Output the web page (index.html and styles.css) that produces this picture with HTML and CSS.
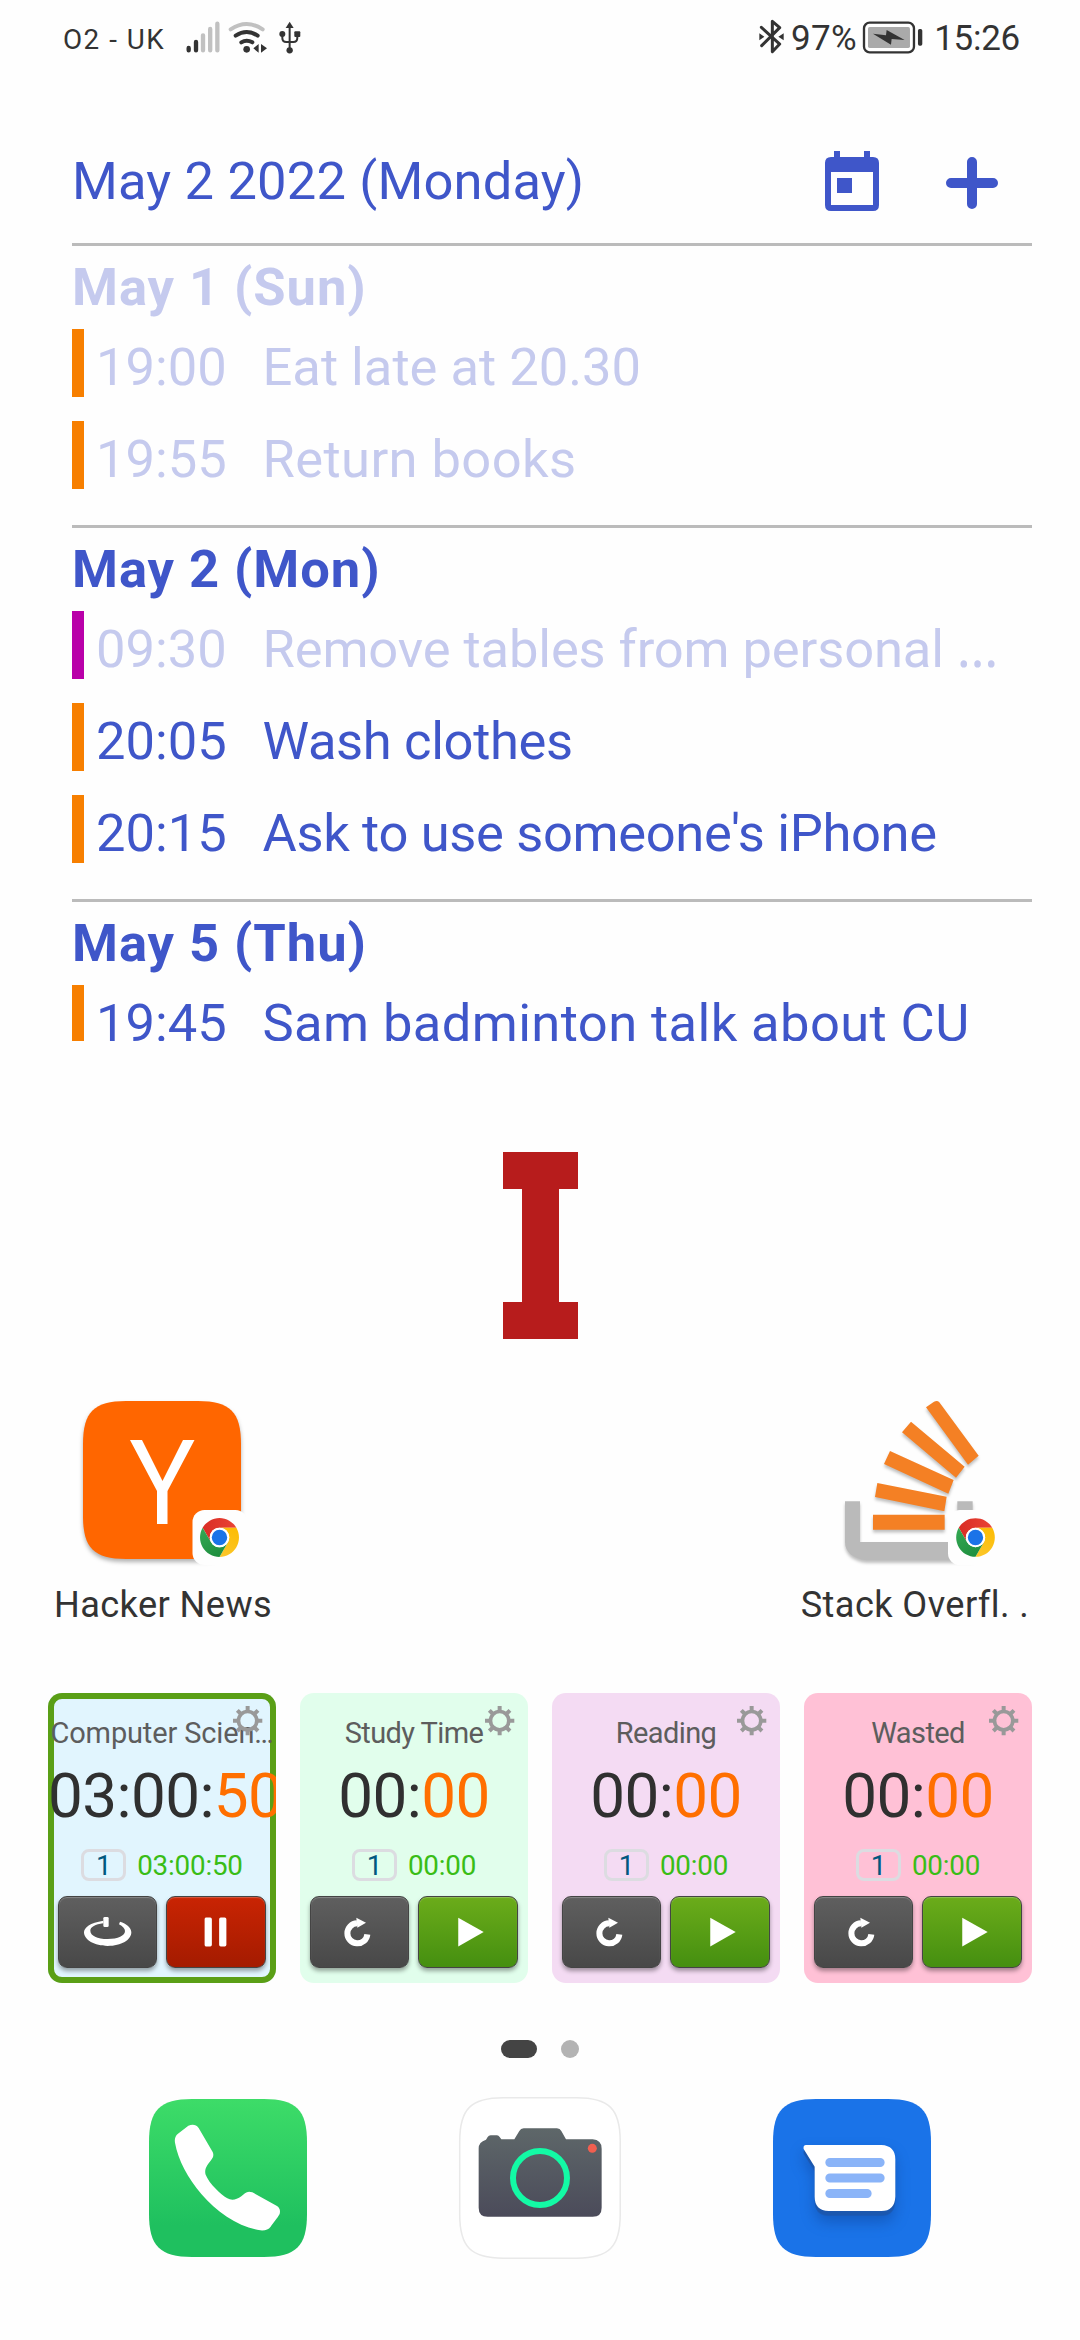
FILE: index.html
```html
<!DOCTYPE html>
<html lang="en">
<head>
<meta charset="utf-8">
<title>Home screen</title>
<link rel="stylesheet" href="styles.css">
</head>
<body>
<svg class="defs" width="0" height="0" aria-hidden="true">
  <defs>
    <path id="squircle" d="M0 43C0 11 11 0 43 0H115C147 0 158 11 158 43V115C158 147 147 158 115 158H43C11 158 0 147 0 115Z"/>
    <path id="chrome-arm" d="M-50.2-29A58 58 0 0 1 50.2-29L0-29A29 29 0 0 0-25.1 14.5Z"/>
    <linearGradient id="chrome-red" x1="0" x2="1"><stop offset="0" stop-color="#d92d25"/><stop offset="1" stop-color="#ea4335"/></linearGradient>
    <linearGradient id="chrome-yellow" x1="0" x2="1"><stop offset="0" stop-color="#fcbc04"/><stop offset="1" stop-color="#fcc72c"/></linearGradient>
    <linearGradient id="chrome-green" x1="0" x2="1"><stop offset="0" stop-color="#1e8e3e"/><stop offset="1" stop-color="#34a853"/></linearGradient>
    <g id="chrome">
      <use href="#chrome-arm" fill="url(#chrome-red)"/>
      <use href="#chrome-arm" fill="url(#chrome-yellow)" transform="rotate(120)"/>
      <use href="#chrome-arm" fill="url(#chrome-green)" transform="rotate(240)"/>
      <circle r="29" fill="#fff"/><circle r="23" fill="#1a73e8"/>
    </g>
    <g id="gear" fill="none" stroke="#999">
      <circle cx="44" cy="44" r="27.5" stroke-width="11"/>
      <path stroke-width="12" d="M44 14V0M44 74V88M14 44H0M74 44H88"/>
      <path stroke-width="12" d="M24 24L13 13M64 24L75 13M24 64L13 75M64 64L75 75"/>
    </g>
    <g id="reset">
      <path d="M172 115A30 30 0 1 1 141 82" fill="none" stroke="#fff" stroke-width="18"/>
      <path d="M139 65L168 80L142 95Z" fill="#fff"/>
    </g>
    <path id="play" d="M122 65L199 108L122 152Z" fill="#fff"/>
  </defs>
</svg>

<div class="screen">
  <header class="status">
    <span class="carrier">O2 - UK</span>
    <svg class="signal" viewBox="435 60 110 110">
      <g stroke-width="13" stroke-linecap="round"><path stroke="#333" d="M446 144V151M468 126V151"/><path stroke="#c1c1c1" d="M489 106V151M510.500 87V151M532 71V151"/></g>
    </svg>
    <svg class="wifi" viewBox="565 60 120 110">
      <g fill="none" stroke-linecap="round" stroke-width="12"><path stroke="#c1c1c1" d="M573 88Q621 56 669 88"/><path stroke="#333" d="M588 107Q621 85 654 107M605 127Q621 117 638 127"/></g>
      <circle cx="621" cy="148" r="10" fill="#333"/><path fill="#333" d="M657 132V158L641 145ZM664 132L682 145L664 158Z"/>
    </svg>
    <svg class="usb" viewBox="715 60 70 110">
      <path fill="none" stroke="#333" stroke-width="6" d="M750 75V150M728 104V114Q728 126 740 126H761Q773 126 773 114V104"/>
      <path fill="#333" d="M750 65L762 84H738Z"/><circle cx="728" cy="102" r="9" fill="#333"/><rect x="764" y="94" width="18" height="17" rx="3" fill="#333"/><circle cx="750" cy="151" r="9.500" fill="#333"/>
    </svg>
    <svg class="bluetooth" viewBox="595 55 80 110">
      <path fill="none" stroke="#333" stroke-width="9" stroke-linejoin="round" stroke-linecap="round" d="M605 83L660 133L638 156V65L660 84L606 138"/>
      <path fill="#333" d="M599 101L614 111L599 122ZM672 101V122L656 111Z"/>
    </svg>
    <span class="percent">97%</span>
    <svg class="battery" viewBox="900 60 190 105">
      <rect x="909" y="68" width="150" height="89" rx="17" fill="#fff" stroke="#333" stroke-width="7"/>
      <rect x="921" y="81" width="126" height="63" rx="5" fill="#aaa"/>
      <path fill="#333" d="M936 101L975 106L977 90L1031 120L992 117L990 134Z"/>
      <rect x="1071" y="87" width="13" height="50" rx="5" fill="#333"/>
    </svg>
    <span class="clock">15:26</span>
  </header>

  <section class="agenda">
    <div class="agenda-head">
      <h1>May 2 2022 (Monday)</h1>
      <svg class="calendar" viewBox="0 0 54 60"><path fill="#3f56c9" fill-rule="evenodd" d="M9 0H15V6H39V0H45V6H48Q54 6 54 12V54Q54 60 48 60H6Q0 60 0 54V12Q0 6 6 6H9ZM6 21V54H48V21ZM12 27H27V42H12Z"/></svg>
      <svg class="plus" viewBox="0 0 52 52"><path stroke="#3f56c9" stroke-width="10" stroke-linecap="round" d="M26 5V47M5 26H47"/></svg>
    </div>
    <div class="day past">
      <h2>May 1 (Sun)</h2>
      <div class="event"><time>19:00</time><span>Eat late at 20.30</span></div>
      <div class="event"><time>19:55</time><span class="loose">Return books</span></div>
    </div>
    <div class="day">
      <h2>May 2 (Mon)</h2>
      <div class="event past magenta"><time>09:30</time><span class="snug">Remove tables from personal <span class="ellipsis">…</span></span></div>
      <div class="event"><time>20:05</time><span class="tight">Wash clothes</span></div>
      <div class="event"><time>20:15</time><span class="tight">Ask to use someone's iPhone</span></div>
    </div>
    <div class="day last">
      <h2>May 5 (Thu)</h2>
      <div class="event"><time>19:45</time><span class="loose">Sam badminton talk about CU</span></div>
    </div>
  </section>

  <svg class="monogram" viewBox="0 0 75 187"><path fill="#b71c1c" d="M0 0H75V37H56V150H75V187H0V150H19V37H0Z"/></svg>

  <nav class="shortcuts">
    <div class="app">
      <svg viewBox="0 0 158 158">
        <use class="shadow" href="#squircle" fill="#ff6600"/>
        <path fill="#fff" d="M47 39H59L79.500 80L100 39H111.500L84.500 90V123H74V90Z"/>
        <rect x="109.500" y="109" width="55" height="55" rx="12" fill="#fefefe"/>
        <use href="#chrome" transform="translate(136.500 136.500) scale(.336)"/>
      </svg>
      <span>Hacker News</span>
    </div>
    <div class="app">
      <svg viewBox="237 93 474 474">
        <path class="shadow-lg" fill="#bababa" d="M255 394H300V516H592V394H638V571H318C278 566 255 545 255 516Z"/>
        <g class="shadow-lg" fill="#f48024">
          <path d="M339 434H554V479H339ZM352 339L560 380L553 424L345 381ZM390 243L581 330L565 371L372 282ZM453 155L614 290L588 323L426 187ZM498 112L522 95Q532 90 538 97L656 257L624 284Z"/>
        </g>
        <rect x="564" y="420" width="166" height="166" rx="36" fill="#fefefe"/>
        <use href="#chrome" transform="translate(646.500 502.500)"/>
      </svg>
      <span class="wide">Stack Overfl. .</span>
    </div>
  </nav>

  <section class="timers">
    <article class="timer blue">
      <svg class="gear" viewBox="0 0 88 88"><use href="#gear"/></svg>
      <h3 class="full">Computer Scien…</h3>
      <div class="elapsed">03:00:<b>50</b></div>
      <div class="total"><i>1</i><span>03:00:50</span></div>
      <div class="buttons">
        <button class="grey"><svg viewBox="0 0 297 216"><path fill="#fff" d="M136 74C96 80 78 95 78 109C78 132 110 150 149 150C190 150 220 132 220 109C220 95 205 82 186 77L183 85C194 91 201 98 201 105C201 119 180 129 149 129C118 129 97 119 97 104C97 93 112 85 136 82Z"/><rect x="136" y="63" width="16" height="30" rx="4" fill="#fff"/></svg></button>
        <button class="red"><svg viewBox="0 0 300 216"><path fill="#fff" d="M121 64H134Q139 64 139 69V147Q139 152 134 152H121Q117 152 117 147V69Q117 64 121 64ZM166 64H178Q183 64 183 69V147Q183 152 178 152H166Q161 152 161 147V69Q161 64 166 64Z"/></svg></button>
      </div>
    </article>
    <article class="timer green">
      <svg class="gear" viewBox="0 0 88 88"><use href="#gear"/></svg>
      <h3>Study Time</h3>
      <div class="elapsed">00:<b>00</b></div>
      <div class="total"><i>1</i><span>00:00</span></div>
      <div class="buttons"><button class="grey"><svg viewBox="0 0 297 216"><use href="#reset"/></svg></button><button class="go"><svg viewBox="0 0 300 216"><use href="#play"/></svg></button></div>
    </article>
    <article class="timer purple">
      <svg class="gear" viewBox="0 0 88 88"><use href="#gear"/></svg>
      <h3>Reading</h3>
      <div class="elapsed">00:<b>00</b></div>
      <div class="total"><i>1</i><span>00:00</span></div>
      <div class="buttons"><button class="grey"><svg viewBox="0 0 297 216"><use href="#reset"/></svg></button><button class="go"><svg viewBox="0 0 300 216"><use href="#play"/></svg></button></div>
    </article>
    <article class="timer pink">
      <svg class="gear" viewBox="0 0 88 88"><use href="#gear"/></svg>
      <h3>Wasted</h3>
      <div class="elapsed">00:<b>00</b></div>
      <div class="total"><i>1</i><span>00:00</span></div>
      <div class="buttons"><button class="grey"><svg viewBox="0 0 297 216"><use href="#reset"/></svg></button><button class="go"><svg viewBox="0 0 300 216"><use href="#play"/></svg></button></div>
    </article>
  </section>

  <div class="pages"><span class="current"></span><span></span></div>

  <footer class="dock">
    <svg viewBox="0 0 158 158">
      <defs><linearGradient id="phone-bg" x2="0" y2="1"><stop offset="0" stop-color="#3ddc68"/><stop offset=".8" stop-color="#1fc05f"/></linearGradient></defs>
      <use href="#squircle" fill="url(#phone-bg)"/>
      <path transform="scale(.3333) translate(-58 -237)" fill="#fff" d="M176 317Q196 309 207 324L249 396Q254 407 247 416C236 432 222 445 228 464C238 490 275 525 293 535C305 542 320 540 335 529C345 520 352 511 368 517L442 558Q454 566 450 582C445 592 430 610 423 620Q413 633 392 631C330 622 262 578 215 522C175 474 145 420 136 368Q133 350 145 341Z"/>
    </svg>
    <svg viewBox="0 0 158 158">
      <defs><linearGradient id="camera-bg" x2="0" y2="1"><stop offset="0" stop-color="#5e6769"/><stop offset="1" stop-color="#4b4b5a"/></linearGradient></defs>
      <use href="#squircle" transform="translate(-1.300 -1.300) scale(1.016)" fill="#fff" stroke="#e9e9e9" stroke-width="1.500"/>
      <g transform="scale(.3333) translate(-993 -237)">
        <path fill="url(#camera-bg)" d="M1046 385Q1046 366 1068 359L1073 351Q1076 346 1082 346H1101Q1106 346 1109 351L1114 358H1153L1168 333Q1172 325 1181 325H1281Q1290 325 1294 333L1308 358H1388Q1415 360 1415 386V563Q1415 590 1388 590H1073Q1046 590 1046 563Z"/>
        <circle cx="1230" cy="474" r="81" fill="none" stroke="#13faa5" stroke-width="18"/>
        <circle cx="1387" cy="385" r="13.500" fill="#f15f50"/>
      </g>
    </svg>
    <svg viewBox="0 0 158 158">
      <use href="#squircle" fill="#1a73e8"/>
      <g transform="scale(.3333) translate(-100 -87)">
        <path class="bubble" fill="#fff" d="M199 225H425Q467 227 467 268V380Q465 423 425 423H267Q225 421 225 380V290L192 237Q190 225 199 225Z"/>
        <path stroke="#8ab4f8" stroke-width="27" stroke-linecap="round" d="M270.500 277.500H421.500M270.500 324H421.500M270.500 370.500H382.500"/>
      </g>
    </svg>
  </footer>
</div>
</body>
</html>
```

FILE: styles.css
```css
* { box-sizing: border-box; }
body { margin: 0; background: #fefefe; font-family: Roboto, "Noto Sans", sans-serif; }
svg { display: block; flex: none; overflow: visible; }
h1, h2, h3 { margin: 0; font-weight: 400; }
.defs { position: absolute; }
.screen { width: 1080px; height: 2340px; overflow: hidden; display: flex; flex-direction: column; }

/* Status bar */
.status { height: 76px; flex: none; display: flex; align-items: flex-start; padding-left: 63px; color: #333; white-space: nowrap; }
.carrier { width: 122px; font-size: 27.800px; line-height: 79px; letter-spacing: 1.500px; }
.signal { width: 36.700px; height: 36.700px; margin-top: 20px; }
.wifi { width: 40px; height: 36.700px; margin: 20px 10px 0 6.600px; }
.usb { width: 23.300px; height: 36.700px; margin-top: 20px; }
.bluetooth { width: 26.700px; height: 36.700px; margin: 18.300px 6px 0 456.700px; }
.percent { width: 70px; font-size: 35px; line-height: 78px; letter-spacing: .400px; }
.battery { width: 63.300px; height: 35px; margin-top: 20px; }
.clock { margin-left: 10px; font-size: 35px; line-height: 78px; letter-spacing: -.300px; }

/* Agenda widget */
.agenda { height: 965px; flex: none; margin: 0 48px 0 72px; overflow: hidden; color: #3f56c9; font-size: 52.500px; white-space: nowrap; }
.agenda-head { height: 167px; padding: 42px 34px 0 0; display: flex; align-items: center; }
h1 { flex: 1; font-size: 52.500px; letter-spacing: .170px; }
.calendar { width: 54px; height: 60px; }
.plus { width: 52px; height: 52px; margin: 5px 0 0 67px; }
.day { border-top: 3px solid #bbb; padding-bottom: 12px; }
.day h2 { height: 83px; font-size: 52.500px; line-height: 82px; font-weight: 700; letter-spacing: .950px; }
.event { height: 68px; margin-bottom: 24px; display: flex; border-left: 12px solid #f77f00; line-height: 76px; }
.event.magenta { border-color: #b900a9; }
.event time { width: 178.500px; padding-left: 12px; }
.past h2, .past time, .past span { color: #c5caee; }
.loose { letter-spacing: .400px; }
.snug { letter-spacing: -.120px; }
.tight { letter-spacing: -.350px; }
.ellipsis { font-family: "Noto Sans", sans-serif; line-height: 1px; }

.monogram { width: 75px; height: 187px; margin: 111px 0 0 503px; }

/* Pinned shortcuts */
.shortcuts { height: 292px; flex: none; margin-top: 62px; padding: 0 40.500px; display: flex; justify-content: space-between; }
.app { width: 243px; display: flex; flex-direction: column; align-items: center; color: #333; font-size: 36.200px; white-space: nowrap; }
.app svg { width: 158px; height: 158px; }
.app span { margin-top: 16px; line-height: 60px; letter-spacing: .400px; margin-left: 2px; }
.app .wide { letter-spacing: .400px; margin-left: -6px; }
.shadow { filter: drop-shadow(0 3px 2px rgba(0,0,0,.3)); }
.shadow-lg { filter: drop-shadow(0 8px 5px rgba(0,0,0,.25)); }

/* Timers */
.timers { height: 290px; flex: none; margin: 0 48px; display: grid; grid-template-columns: repeat(4, 228px); gap: 24px; }
.timer { position: relative; overflow: hidden; border-radius: 14px; padding-top: 20px; text-align: center; white-space: nowrap; }
.blue { background: #e1f5fe; box-shadow: inset 0 0 0 6px #5a9f16; }
.green { background: #e1feec; }
.purple { background: #f4dbf3; }
.pink { background: #ffc1d6; }
.timer h3 { height: 40px; font-size: 29px; line-height: 40px; color: #5d5d5d; letter-spacing: -.600px; }
.timer h3.full { letter-spacing: -.150px; }
.gear { position: absolute; left: 185px; top: 13px; width: 29.300px; height: 29.300px; }
.elapsed { height: 86px; font-size: 62px; line-height: 86px; color: #303030; letter-spacing: -.600px; }
.elapsed b { font-weight: 400; color: #ff6f00; }
.total { height: 32px; margin-top: 10px; display: flex; justify-content: center; gap: 11px; color: #39bd16; font-size: 27.800px; line-height: 33px; letter-spacing: -.200px; }
.total i { width: 45px; border: 3px solid #dcdce1; border-radius: 8px; line-height: 27px; font-style: normal; color: #00587f; }
.buttons { margin: 15px 10px 0; display: flex; justify-content: space-between; }
button { height: 72px; padding: 0; border: 1px solid #444; border-radius: 9px; box-shadow: 0 3px 4px rgba(0,0,0,.35), inset 0 1px 1px rgba(255,255,255,.25); }
button svg { height: 72px; margin: -1px; width: 99px; }
.grey { width: 99px; background: linear-gradient(#5f5f5f, #484848); }
.red { width: 100px; background: linear-gradient(#c92403, #a41b00); }
.go { width: 100px; background: linear-gradient(#6bac1a, #458f10); }

.pages { height: 18px; flex: none; margin-top: 57px; display: flex; justify-content: center; gap: 24px; }
.pages span { width: 18px; border-radius: 9px; background: #b3b3b3; }
.pages .current { width: 36px; background: #444; }

.dock { margin: 41px 149px 0; display: flex; justify-content: space-between; }
.dock svg { width: 158px; height: 158px; }
.bubble { filter: drop-shadow(0 14px 0 #1b57ae) drop-shadow(0 20px 20px rgba(10,50,120,.35)); }
```
